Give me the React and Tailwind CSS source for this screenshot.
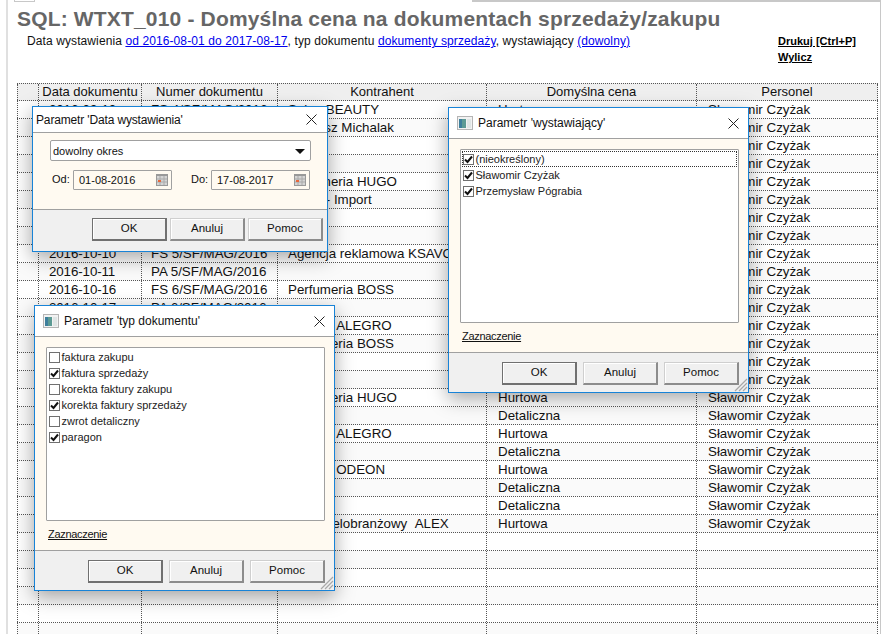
const pol = 'Sławomir Czyżak';

const rows = [
  ['2016-09-10', 'FS 4/SF/MAG/2016', 'Salon BEAUTY', 'Hurtowa'],
  ['2016-09-12', 'FS 5/SF/MAG/2016', 'Tadeusz Michalak', 'Hurtowa'],
  ['2016-09-14', 'PA 1/SF/MAG/2016', '', 'Detaliczna'],
  ['2016-09-15', 'PA 2/SF/MAG/2016', '', 'Detaliczna'],
  ['2016-09-20', 'FS 2/SF/MAG/2016', 'Perfumeria HUGO', 'Hurtowa'],
  ['2016-09-22', 'FS 3/SF/MAG/2016', 'Firma - Import', 'Hurtowa'],
  ['2016-10-01', 'PA 3/SF/MAG/2016', '', 'Detaliczna'],
  ['2016-10-05', 'PA 4/SF/MAG/2016', '', 'Detaliczna'],
  ['2016-10-10', 'FS 5/SF/MAG/2016', 'Agencja reklamowa KSAVO', 'Hurtowa'],
  ['2016-10-11', 'PA 5/SF/MAG/2016', '', 'Detaliczna'],
  ['2016-10-16', 'FS 6/SF/MAG/2016', 'Perfumeria BOSS', 'Hurtowa'],
  ['2016-10-17', 'PA 6/SF/MAG/2016', '', 'Detaliczna'],
  ['2016-10-20', 'FS 7/SF/MAG/2016', 'Market\u00a0\u00a0ALEGRO', 'Hurtowa'],
  ['2016-10-24', 'FS 8/SF/MAG/2016', 'Perfumeria BOSS', 'Hurtowa'],
  ['2016-10-25', 'PA 7/SF/MAG/2016', '', 'Detaliczna'],
  ['2016-10-28', 'PA 8/SF/MAG/2016', '', 'Detaliczna'],
  ['2016-11-02', 'FS 9/SF/MAG/2016', 'Perfumeria HUGO', 'Hurtowa'],
  ['2016-11-03', 'PA 9/SF/MAG/2016', '', 'Detaliczna'],
  ['2016-11-08', 'FS 10/SF/MAG/2016', 'Market\u00a0\u00a0ALEGRO', 'Hurtowa'],
  ['2016-11-09', 'PA 10/SF/MAG/2016', '', 'Detaliczna'],
  ['2016-11-14', 'FS 11/SF/MAG/2016', 'Market\u00a0\u00a0ODEON', 'Hurtowa'],
  ['2016-11-15', 'PA 11/SF/MAG/2016', '', 'Detaliczna'],
  ['2016-11-16', 'PA 12/SF/MAG/2016', '', 'Detaliczna'],
  ['2016-11-21', 'FS 12/SF/MAG/2016', 'Dom wielobranżowy\u00a0\u00a0ALEX', 'Hurtowa'],
];

const cols = 'grid grid-cols-[22px_103px_136px_209px_210px_181px] ml-[17px] w-[861px] border-b border-dotted border-[#555]';
const cell = 'border-r border-dotted border-[#555] overflow-hidden whitespace-nowrap';

function Row({ row, index }) {
  const shaded = index % 2 === 1;
  return (
    <div className={`${cols} h-[18px] leading-[17px] ${shaded ? 'bg-[#fafafa]' : 'bg-white'}`}>
      <div className={`${cell} border-l`} />
      <div className={`${cell} pl-[10px] tracking-[-0.1px]`}>{row?.[0]}</div>
      <div className={`${cell} pl-[9px]`}>{row?.[1]}</div>
      <div className={`${cell} pl-[10px]`}>{row?.[2]}</div>
      <div className={`${cell} pl-[11px]`}>{row?.[3]}</div>
      <div className={`${cell} pl-[11px]`}>{row ? pol : ''}</div>
    </div>
  );
}

function WinIcon() {
  return (
    <svg width="16" height="14" viewBox="0 0 16 14" className="shrink-0">
      <rect x="0.5" y="0.5" width="15" height="13" fill="#f2f2f2" stroke="#b4b4b4" />
      <rect x="2" y="3" width="7" height="9" fill="#5c9a94" />
      <rect x="2" y="3" width="3" height="9" fill="#3d7f9c" />
      <rect x="10" y="3" width="4" height="9" fill="#dfe5e5" />
    </svg>
  );
}

function CloseX() {
  return (
    <svg width="11" height="11" viewBox="0 0 11 11" className="shrink-0">
      <path d="M0.5 0.5L10.5 10.5M10.5 0.5L0.5 10.5" stroke="#222" strokeWidth="1" fill="none" />
    </svg>
  );
}

function Grip() {
  return (
    <svg width="14" height="14" viewBox="0 0 14 14" className="absolute right-0 bottom-0">
      <path d="M1 13L13 1M5 13L13 5M9 13L13 9" stroke="#a8a8a8" strokeWidth="1.2" fill="none" />
    </svg>
  );
}

function Btn({ children, primary }) {
  return (
    <button
      className={`w-[75px] h-[23px] bg-[#f0f0f0] text-[11.5px] leading-none text-[#111] shadow-[inset_1px_1px_0_#fff] ${
        primary
          ? 'border border-[#707070] border-r-2 border-b-2'
          : 'border border-t-[#cfcfcf] border-l-[#cfcfcf] border-r-2 border-b-2 border-r-[#8c8c8c] border-b-[#8c8c8c]'
      }`}
    >
      {children}
    </button>
  );
}

function Footer({ layout, grip }) {
  return (
    <div className={`relative flex-1 bg-[#f0f0f0] border-t border-[#a0a0a0] flex justify-end items-start ${layout}`}>
      <Btn primary>OK</Btn>
      <Btn>Anuluj</Btn>
      <Btn>Pomoc</Btn>
      {grip && <Grip />}
    </div>
  );
}

function Check({ on }) {
  return (
    <span className="w-[11px] h-[11px] shrink-0 bg-white border border-[#707070] flex items-center justify-center">
      {on && (
        <svg width="9" height="9" viewBox="0 0 9 9">
          <path d="M1 4.5L3.5 7L8 1.5" stroke="#111" strokeWidth="2" fill="none" />
        </svg>
      )}
    </span>
  );
}

function CheckList({ items, focused }) {
  return (
    <div className="h-[174px] bg-white border border-[#a0a0a0] rounded-[1px] pt-[1px] pl-[1px] pr-[1px]">
      {items.map(([label, on], i) => (
        <div
          key={label}
          className={`h-[16px] flex items-center gap-[1.5px] pl-[1px] text-[11px] leading-none text-[#222] ${
            focused && i === 0 ? 'outline outline-dotted outline-[#333] -outline-offset-1' : ''
          }`}
        >
          <Check on={on} />
          <span>{label}</span>
        </div>
      ))}
    </div>
  );
}

function CheckDialog({ pos, title, items, focused }) {
  return (
    <div className={`absolute ${pos} w-[301px] h-[286px] flex flex-col bg-white border border-[#1883d7] shadow-[0_6px_18px_rgba(0,0,0,0.35)]`}>
      <div className="h-[30px] shrink-0 flex items-center gap-[5px] pl-[8px] pr-[9px] text-[12px] text-[#111]">
        <WinIcon />
        <span className="flex-1">{title}</span>
        <CloseX />
      </div>
      <div className="h-[214px] shrink-0 bg-[#fffaf1] border-t border-[#a0a0a0] pt-[10px] pl-[11px] pr-[9px]">
        <CheckList items={items} focused={focused} />
        <div className="mt-[6px] ml-[2px] text-[11px] leading-[14px] tracking-[-0.3px] underline text-[#111]">Zaznaczenie</div>
      </div>
      <Footer layout="pt-[9px] pr-[9px] gap-[6px]" grip />
    </div>
  );
}

function CalendarIcon() {
  return (
    <svg width="12" height="12" viewBox="0 0 12 12" className="shrink-0">
      <rect width="12" height="12" fill="#999" />
      <rect x="1" y="2" width="10" height="9" fill="#d4d4d4" />
      <path d="M1 5H11M1 8H11M4 2V11M8 2V11" stroke="#aaa" strokeWidth="1" />
      <rect x="2" y="6" width="3" height="2" fill="#e8683c" />
    </svg>
  );
}

function DateField({ value, width }) {
  return (
    <div className={`${width} h-[20px] flex items-center justify-between pl-[5px] pr-[3px] bg-[#fffaf1] border border-[#a0a0a0] rounded-[1px] text-[11px] text-[#111]`}>
      <span>{value}</span>
      <CalendarIcon />
    </div>
  );
}

function DateDialog() {
  return (
    <div className="absolute left-[32px] top-[106px] w-[296px] h-[146px] flex flex-col bg-white border border-[#1883d7] shadow-[0_6px_18px_rgba(0,0,0,0.35)]">
      <div className="h-[25px] shrink-0 flex items-center justify-between pl-[3px] pr-[10px] text-[12px] tracking-[-0.15px] text-[#111]">
        <span>Parametr 'Data wystawienia'</span>
        <CloseX />
      </div>
      <div className="h-[77px] shrink-0 bg-[#fffaf1] border-t border-[#a0a0a0] pt-[7px] pl-[17px] pr-[16px]">
        <div className="h-[21px] flex items-center justify-between pl-[2px] pt-[1px] pr-[5px] bg-white border border-[#a0a0a0] rounded-[2px] text-[11px] text-[#111]">
          <span>dowolny okres</span>
          <svg width="10" height="5" viewBox="0 0 10 5">
            <path d="M0 0H10L5 5Z" fill="#111" />
          </svg>
        </div>
        <div className="mt-[9px] flex items-center text-[11px] text-[#111]">
          <span className="w-[23px] pl-[2px] pb-[1px]">Od:</span>
          <DateField value="01-08-2016" width="w-[99px]" />
          <span className="ml-[19px] w-[20px] pb-[1px]">Do:</span>
          <DateField value="17-08-2017" width="w-[99px]" />
        </div>
      </div>
      <Footer layout="pt-[8px] pr-[4px] gap-[3px]" />
    </div>
  );
}

export default function App() {
  const blanks = Array.from({ length: 6 });
  return (
    <div className="relative w-[884px] h-[634px] overflow-hidden bg-white font-['Liberation_Sans',Arial,sans-serif] text-[13.33px] text-[#111]">
      <div className="h-[2px] flex">
        <div className="ml-[14px] w-[21px] h-[2px] border-x border-b border-[#c8c8c8]" />
        <div className="ml-[437px] flex-1 mr-[3px] border-t border-b border-[#c8c8c8]" />
      </div>
      <div className="absolute left-[6px] top-0 bottom-0 w-[2px] bg-[#e0e0e0]" />
      <div className="absolute right-[3px] top-0 bottom-0 w-[1px] bg-[#c8c8c8]" />

      <h1 className="mt-[5px] ml-[17px] text-[21px] leading-[24px] font-bold text-[#666] tracking-[0.17px] whitespace-nowrap">
        SQL: WTXT_010 - Domyślna cena na dokumentach sprzedaży/zakupu
      </h1>

      <div className="flex h-[52px] text-[12px] leading-[14px]">
        <p className="ml-[27px] mt-[3px] w-[751px] whitespace-nowrap tracking-[0.1px]">
          Data wystawienia <a className="text-[#0000ee] underline">od 2016-08-01 do 2017-08-17</a>, typ dokumentu{' '}
          <a className="text-[#0000ee] underline">dokumenty sprzedaży</a>, wystawiający{' '}
          <a className="text-[#0000ee] underline">(dowolny)</a>
        </p>
        <div className="mt-[2px] text-[11px] font-bold underline text-black leading-[16px]">
          <div>Drukuj [Ctrl+P]</div>
          <div>Wylicz</div>
        </div>
      </div>

      <div className={`${cols} h-[18px] text-[13px] leading-[16px] text-center bg-[#efefef] border-t`}>
        <div className={`${cell} border-l`} />
        <div className={cell}>Data dokumentu</div>
        <div className={cell}>Numer dokumentu</div>
        <div className={cell}>Kontrahent</div>
        <div className={cell}>Domyślna cena</div>
        <div className={cell}>Personel</div>
      </div>
      {rows.map((row, i) => (
        <Row key={i} row={row} index={i} />
      ))}
      {blanks.map((_, i) => (
        <Row key={i} index={rows.length + i} />
      ))}

      <DateDialog />
      <CheckDialog
        pos="left-[448px] top-[107px]"
        title="Parametr 'wystawiający'"
        focused
        items={[
          ['(nieokreślony)', true],
          ['Sławomir Czyżak', true],
          ['Przemysław Pógrabia', true],
        ]}
      />
      <CheckDialog
        pos="left-[34px] top-[305px]"
        title="Parametr 'typ dokumentu'"
        items={[
          ['faktura zakupu', false],
          ['faktura sprzedaży', true],
          ['korekta faktury zakupu', false],
          ['korekta faktury sprzedaży', true],
          ['zwrot detaliczny', false],
          ['paragon', true],
        ]}
      />
    </div>
  );
}
